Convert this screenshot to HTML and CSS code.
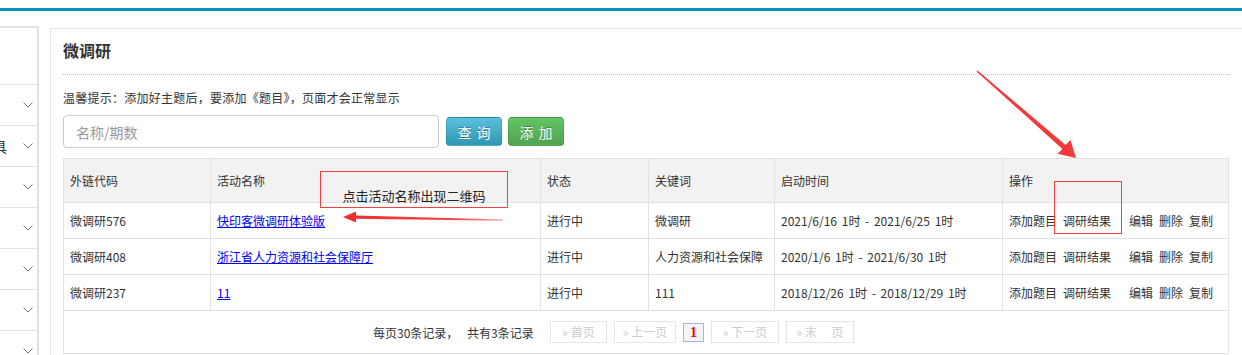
FILE: index.html
```html
<!DOCTYPE html>
<html lang="zh-CN">
<head>
  <meta charset="UTF-8" />
  <meta name="viewport" content="width=device-width, initial-scale=1.0"/>
  <title>微调研</title>
  <link rel="stylesheet" href="styles.css">
</head>
<body>
  <div class="topline"></div>

  <div class="wrap">
    <aside class="sidebar">
      <div class="side-head"></div>
      <div class="side-item"><svg class="chev" width="10" height="6" viewBox="0 0 10 6"><polyline points="0.5,0.5 5,5 9.5,0.5"/></svg></div>
      <div class="side-item"><span class="side-label">工具</span><svg class="chev" width="10" height="6" viewBox="0 0 10 6"><polyline points="0.5,0.5 5,5 9.5,0.5"/></svg></div>
      <div class="side-item"><svg class="chev" width="10" height="6" viewBox="0 0 10 6"><polyline points="0.5,0.5 5,5 9.5,0.5"/></svg></div>
      <div class="side-item"><svg class="chev" width="10" height="6" viewBox="0 0 10 6"><polyline points="0.5,0.5 5,5 9.5,0.5"/></svg></div>
      <div class="side-item"><svg class="chev" width="10" height="6" viewBox="0 0 10 6"><polyline points="0.5,0.5 5,5 9.5,0.5"/></svg></div>
      <div class="side-item"><svg class="chev" width="10" height="6" viewBox="0 0 10 6"><polyline points="0.5,0.5 5,5 9.5,0.5"/></svg></div>
      <div class="side-item"><svg class="chev" width="10" height="6" viewBox="0 0 10 6"><polyline points="0.5,0.5 5,5 9.5,0.5"/></svg></div>
    </aside>

    <main class="panel">
      <div class="panel-title">微调研</div>
      <p class="tip">温馨提示：添加好主题后，要添加《题目》，页面才会正常显示</p>

      <div class="search">
        <input type="text" class="search-input" placeholder="名称/期数" />
        <button class="btn btn-info">查询</button>
        <button class="btn btn-success">添加</button>
      </div>

      <table class="grid">
        <colgroup>
          <col style="width:147px">
          <col style="width:330px">
          <col style="width:108px">
          <col style="width:126px">
          <col style="width:228px">
          <col>
        </colgroup>
        <thead>
          <tr>
            <th>外链代码</th>
            <th>活动名称</th>
            <th>状态</th>
            <th>关键词</th>
            <th>启动时间</th>
            <th>操作</th>
          </tr>
        </thead>
        <tbody>
          <tr>
            <td>微调研576</td>
            <td><a href="#">快印客微调研体验版</a></td>
            <td>进行中</td>
            <td>微调研</td>
            <td class="time">2021/6/16 1时 - 2021/6/25 1时</td>
            <td class="ops"><a>添加题目</a><a class="gap">调研结果</a><a>编辑</a><a>删除</a><a>复制</a></td>
          </tr>
          <tr>
            <td>微调研408</td>
            <td><a href="#">浙江省人力资源和社会保障厅</a></td>
            <td>进行中</td>
            <td>人力资源和社会保障</td>
            <td class="time">2020/1/6 1时 - 2021/6/30 1时</td>
            <td class="ops"><a>添加题目</a><a class="gap">调研结果</a><a>编辑</a><a>删除</a><a>复制</a></td>
          </tr>
          <tr>
            <td>微调研237</td>
            <td><a href="#">11</a></td>
            <td>进行中</td>
            <td>111</td>
            <td class="time">2018/12/26 1时 - 2018/12/29 1时</td>
            <td class="ops"><a>添加题目</a><a class="gap">调研结果</a><a>编辑</a><a>删除</a><a>复制</a></td>
          </tr>
          <tr class="foot">
            <td colspan="6">
              <div class="pager">
                <span class="count count-page">每页30条记录，</span>
                <span class="count count-total">共有3条记录</span>
                <span class="pg pg-first">» 首页</span>
                <span class="pg pg-prev">» 上一页</span>
                <span class="pg-cur">1</span>
                <span class="pg pg-next">» 下一页</span>
                <span class="pg pg-last">» 末　 页</span>
              </div>
            </td>
          </tr>
        </tbody>
      </table>
    </main>
  </div>

  <!-- 标注 -->
  <div class="notes">
    <svg class="arrows" width="1242" height="355" viewBox="0 0 1242 355">
      <defs>
        <linearGradient id="fade1" x1="343" y1="0" x2="503" y2="0" gradientUnits="userSpaceOnUse">
          <stop offset="0" stop-color="#f02c2c"/>
          <stop offset="0.7" stop-color="#f34848"/>
          <stop offset="1" stop-color="#f8a0a0"/>
        </linearGradient>
      </defs>
      <polygon fill="url(#fade1)" points="503,219.4 356,215.6 356,211.5 343,217 356,222.5 356,218.8 503,220.8"/>
      <polygon fill="#f23a3a" points="976.5,71.5 977.5,70.5 1065.6,145.1 1070.5,140 1076,158 1057.5,153.8 1062.4,148.9"/>
    </svg>
    <div class="note-box">点击活动名称出现二维码</div>
    <div class="note-mark"></div>
  </div>
</body>
</html>
```

FILE: styles.css
```css
body {
  margin: 0;
  font-family: "Noto Sans CJK SC", "Noto Sans", sans-serif;
  font-size: 12px;
  color: #333;
  background-color: #fff;
  height: 355px;
  overflow: hidden;
  position: relative;
}
.topline {
  height: 3px;
  margin-top: 8px;
  background-color: #0a90b9;
}
.wrap {
  display: flex;
  padding-top: 15px;
  height: 329px;
  overflow: hidden;
}
.sidebar {
  flex: none;
  width: 37px;
  border-top: 2px solid #e1e1e1;
  border-right: 2px solid #e1e1e1;
  overflow: hidden;
}
.side-head {
  height: 56px;
  border-bottom: 1px solid #e3e3e3;
}
.side-item {
  height: 40px;
  border-bottom: 1px solid #e3e3e3;
  display: flex;
  align-items: center;
  justify-content: flex-end;
  padding-right: 4px;
}
.side-label {
  margin-left: -21px;
  margin-right: auto;
  font-size: 14px;
  color: #333;
  white-space: nowrap;
}
.chev polyline {
  fill: none;
  stroke: #777;
  stroke-width: 1;
}
.panel {
  flex: 1;
  margin: 2px 0 0 11px;
  border: 1px solid #e3e3e3;
  border-right: none;
  border-bottom: none;
  padding: 0 12px;
}
.panel-title {
  height: 45px;
  line-height: 42px;
  font-size: 16px;
  font-weight: bold;
  color: #333;
  border-bottom: 1px dotted #bdbdbd;
}
.tip {
  margin: 15px 0 0;
  line-height: 16px;
  letter-spacing: 0.25px;
}
.search {
  display: flex;
  align-items: center;
  margin-top: 9px;
}
.search-input {
  width: 376px;
  height: 33px;
  box-sizing: border-box;
  border: 1px solid #ccc;
  border-radius: 4px;
  padding: 0 12px;
  font-family: inherit;
  font-size: 14px;
  color: #555;
  outline: none;
}
.search-input::placeholder {
  color: #999;
}
.btn {
  width: 56px;
  height: 29px;
  margin-left: 7px;
  padding: 0 0 0 5px;
  border: 1px solid rgba(0, 0, 0, 0.1);
  border-radius: 4px;
  color: #fff;
  font-family: inherit;
  font-size: 14px;
  letter-spacing: 5px;
  text-shadow: 0 -1px 0 rgba(0, 0, 0, 0.25);
  cursor: pointer;
}
.btn-info {
  background: linear-gradient(#5bc0de, #2f96b4);
}
.btn-success {
  margin-left: 6px;
  background: linear-gradient(#62c462, #51a351);
}
.grid {
  margin-top: 10px;
  width: 1166px;
  table-layout: fixed;
  border-collapse: collapse;
}
.grid th,
.grid td {
  border: 1px solid #e2e2e2;
  padding: 0 0 0 6px;
  text-align: left;
  white-space: nowrap;
  overflow: hidden;
}
.grid th {
  height: 43px;
  font-weight: normal;
  background-color: #f2f2f2;
}
.grid td {
  height: 35px;
}
.grid td a {
  color: #00e;
  text-decoration: underline;
}
.grid td.time {
  word-spacing: 2px;
}
.grid .ops a {
  color: #333;
  text-decoration: none;
  margin-right: 6px;
}
.grid .ops a.gap {
  margin-right: 18px;
}
.grid .foot td {
  height: 42px;
  padding: 0;
}
.pager {
  display: flex;
  align-items: center;
  padding-left: 309px;
}
.count-page {
  width: 94px;
}
.count-total {
  width: 83px;
}
.pg {
  box-sizing: border-box;
  height: 22px;
  line-height: 20px;
  border: 1px solid #e6e6e6;
  color: #ccc;
  text-align: center;
  margin-right: 7px;
}
.pg-first { width: 57px; }
.pg-prev { width: 62px; }
.pg-next { width: 68px; }
.pg-last { width: 68px; }
.pg-cur {
  box-sizing: border-box;
  width: 21px;
  height: 19px;
  line-height: 17px;
  margin-right: 7px;
  border: 1px solid #b0b0dc;
  background-color: #f5f5f5;
  color: #f00;
  font-family: "Liberation Serif", serif;
  font-weight: bold;
  font-size: 14px;
  text-align: center;
}
.notes {
  position: absolute;
  top: 0;
  left: 0;
  width: 1242px;
  height: 355px;
  pointer-events: none;
}
.arrows {
  position: absolute;
  top: 0;
  left: 0;
}
.note-box {
  position: absolute;
  left: 320px;
  top: 171px;
  width: 186px;
  height: 30px;
  padding-bottom: 5px;
  border: 1px solid #f04040;
  display: flex;
  align-items: flex-end;
  justify-content: center;
  font-size: 13px;
  line-height: 13px;
  color: #222;
}
.note-mark {
  position: absolute;
  left: 1054px;
  top: 181px;
  width: 66px;
  height: 51px;
  border: 1px solid #f04040;
}
```
